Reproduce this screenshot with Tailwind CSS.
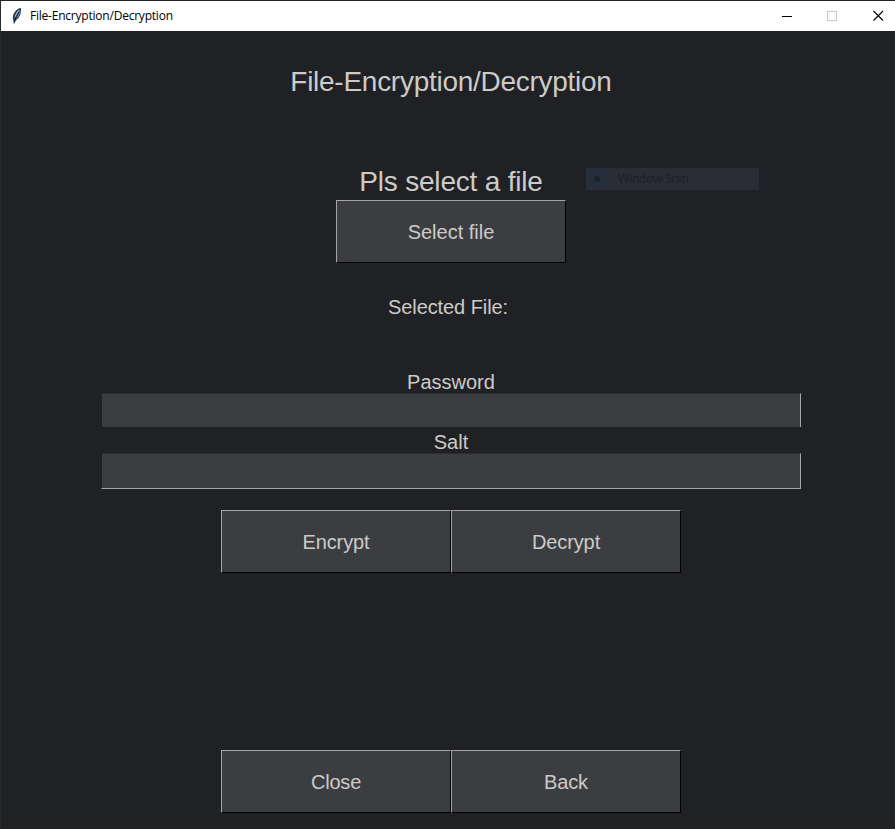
<!DOCTYPE html>
<html lang="en">
<head>
<meta charset="utf-8">
<title>File-Encryption/Decryption</title>
<script src="https://cdn.jsdelivr.net/npm/@tailwindcss/browser@4"></script>
</head>
<body class="h-[829px] w-[895px] overflow-hidden bg-[#202124] font-['Liberation_Sans',Arial,sans-serif] text-[20px] leading-[30px] text-[#cccbc8]">
<div class="relative flex h-[829px] w-[895px] flex-col overflow-hidden border-l border-[#2a2a2d]">
  <header class="flex h-[31px] shrink-0 items-center border-t border-[#26262a] bg-white text-black">
    <svg class="ml-[9px] h-[18px] w-[13px]" viewBox="0 0 13 18">
      <path d="M10.8 1C7 1.5 3 6 2.8 10.5L3.8 16.5L5.5 13.5C9.5 11 11.8 6 10.8 1Z" fill="#26323f"/>
      <path d="M10 2.3C7 4 4.6 7.5 4.3 11.5C6 9.5 7.8 6 10 2.3Z" fill="#8fbce6"/>
      <path d="M10.5 2.5C8.8 5.5 6.8 9 5.8 12.3C8.8 10 10.7 6.5 10.5 2.5Z" fill="#5c8bbd"/>
      <path d="M9 5Q6 9 4.2 16.5" stroke="#111820" stroke-width=".8" fill="none"/>
    </svg>
    <h1 class="ml-[7px] font-['Open_Sans',sans-serif] text-[12px] leading-[16px] tracking-[-0.22px]">File-Encryption/Decryption</h1>
    <div class="mr-[11px] ml-auto flex items-center">
      <svg class="mr-[35px] h-[11px] w-[10px]" viewBox="0 0 10 11" shape-rendering="crispEdges"><path d="M0 5.5H10" stroke="#000"/></svg>
      <svg class="mr-[36px] h-[11px] w-[10px] overflow-visible" viewBox="0 0 10 11" shape-rendering="crispEdges"><path d="M.5 .5H9.5V9.5H.5Z" fill="none" stroke="#c9c9c9"/></svg>
      <svg class="h-[11px] w-[11px] overflow-visible" viewBox="0 0 11 11"><path d="M.5 0L10 9.5M10 0L.5 9.5" stroke="#000" stroke-width="1.1"/></svg>
    </div>
  </header>
  <main class="flex w-[900px] flex-col items-center">
    <h2 class="mt-[31px] h-[40px] text-[28px] leading-[40px] tracking-[-0.27px] whitespace-nowrap">File-Encryption/Decryption</h2>
    <p class="mt-[60px] h-[38px] text-[28px] leading-[40px] tracking-[-0.2px]">Pls select a file</p>
    <button class="h-[63px] w-[230px] border border-t-[#a5a5a5] border-r-black border-b-black border-l-[#a5a5a5] bg-[#3c3d41]">Select file</button>
    <p class="mt-[29px] mr-[6px] h-[30px] tracking-[-0.08px]">Selected File:</p>
    <label class="mt-[45px] h-[26px]" for="password">Password</label>
    <input id="password" class="h-[34px] w-[700px] border-t border-r border-l border-t-[#2b2c2f] border-r-[#a5a5a5] border-l-[#202124] bg-[#3c3d41] bg-clip-padding px-2 outline-none">
    <label class="h-[26px]" for="salt">Salt</label>
    <input id="salt" class="h-[36px] w-[700px] border border-t-[#2b2c2f] border-r-[#a5a5a5] border-b-[#a5a5a5] border-l-[#202124] bg-[#3c3d41] bg-clip-padding px-2 outline-none">
    <div class="mt-[21px] flex">
      <button class="h-[63px] w-[230px] border border-t-[#a5a5a5] border-r-black border-b-black border-l-[#a5a5a5] bg-[#3c3d41] tracking-[-0.1px]">Encrypt</button>
      <button class="h-[63px] w-[230px] border border-t-[#a5a5a5] border-r-black border-b-black border-l-[#a5a5a5] bg-[#3c3d41] tracking-[-0.1px]">Decrypt</button>
    </div>
    <div class="mt-[177px] flex">
      <button class="h-[63px] w-[230px] border border-t-[#a5a5a5] border-r-black border-b-black border-l-[#a5a5a5] bg-[#3c3d41] tracking-[-0.2px]">Close</button>
      <button class="h-[63px] w-[230px] border border-t-[#a5a5a5] border-r-black border-b-black border-l-[#a5a5a5] bg-[#3c3d41] tracking-[-0.1px]">Back</button>
    </div>
  </main>
  <div class="absolute top-[168px] left-[585px] flex h-[22px] w-[173px] items-center bg-[#2a2e34] font-['Open_Sans',sans-serif] text-[12px] leading-[16px] tracking-[-0.2px] text-[#1b2028]">
    <span class="flex h-full w-[22px] items-center justify-center bg-[#252e3a]"><span class="h-[6px] w-[6px] rounded-full bg-[#1b222c]"></span></span>
    <span class="ml-[10px]">Window Snip</span>
  </div>
</div>
</body>
</html>
